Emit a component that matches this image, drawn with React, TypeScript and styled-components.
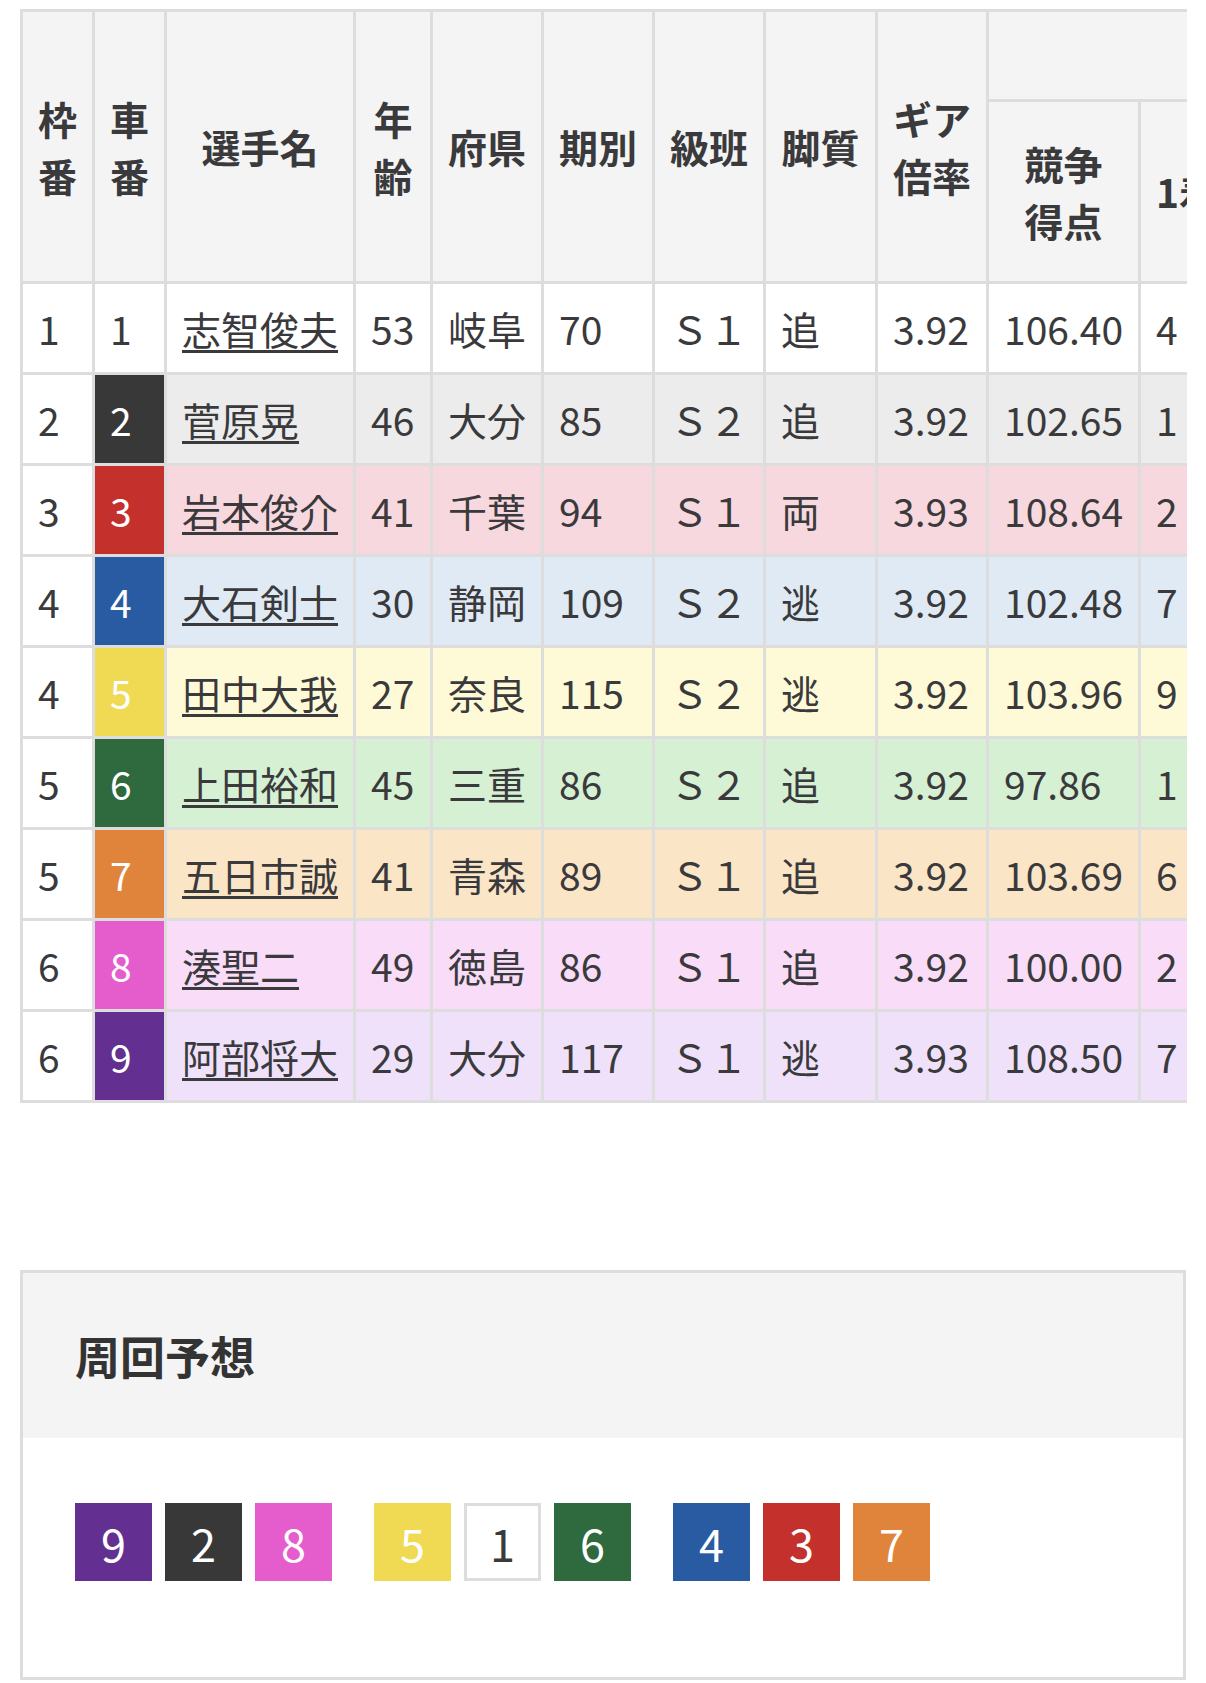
import React from 'react';
import styled, { createGlobalStyle } from 'styled-components';

const GlobalStyle = createGlobalStyle`
    body {
        margin: 0;
        background: #ffffff;
        color: #3a3a3c;
        font-family: 'Noto Sans CJK JP', 'Noto Sans', sans-serif;
    }
`;

type Car = { bg: string; fg: string; row: string };

const cars: Record<number, Car> = {
    1: { bg: '#ffffff', fg: '#3a3a3c', row: '#ffffff' },
    2: { bg: '#383838', fg: '#ffffff', row: '#ececec' },
    3: { bg: '#c4302b', fg: '#ffffff', row: '#f8d8df' },
    4: { bg: '#295ba3', fg: '#ffffff', row: '#e0eaf5' },
    5: { bg: '#f0da54', fg: '#ffffff', row: '#fefad8' },
    6: { bg: '#2e6a3e', fg: '#ffffff', row: '#d6f0d4' },
    7: { bg: '#e0843c', fg: '#ffffff', row: '#fbe5c7' },
    8: { bg: '#e55ccd', fg: '#ffffff', row: '#f8dcf8' },
    9: { bg: '#633092', fg: '#ffffff', row: '#f0e1fa' },
};

const racers = [
    { waku: 1, car: 1, name: '志智俊夫', age: 53, pref: '岐阜', term: 70, cls: 'Ｓ１', leg: '追', gear: '3.92', score: '106.40', first: 4 },
    { waku: 2, car: 2, name: '菅原晃', age: 46, pref: '大分', term: 85, cls: 'Ｓ２', leg: '追', gear: '3.92', score: '102.65', first: 1 },
    { waku: 3, car: 3, name: '岩本俊介', age: 41, pref: '千葉', term: 94, cls: 'Ｓ１', leg: '両', gear: '3.93', score: '108.64', first: 2 },
    { waku: 4, car: 4, name: '大石剣士', age: 30, pref: '静岡', term: 109, cls: 'Ｓ２', leg: '逃', gear: '3.92', score: '102.48', first: 7 },
    { waku: 4, car: 5, name: '田中大我', age: 27, pref: '奈良', term: 115, cls: 'Ｓ２', leg: '逃', gear: '3.92', score: '103.96', first: 9 },
    { waku: 5, car: 6, name: '上田裕和', age: 45, pref: '三重', term: 86, cls: 'Ｓ２', leg: '追', gear: '3.92', score: '97.86', first: 1 },
    { waku: 5, car: 7, name: '五日市誠', age: 41, pref: '青森', term: 89, cls: 'Ｓ１', leg: '追', gear: '3.92', score: '103.69', first: 6 },
    { waku: 6, car: 8, name: '湊聖二', age: 49, pref: '徳島', term: 86, cls: 'Ｓ１', leg: '追', gear: '3.92', score: '100.00', first: 2 },
    { waku: 6, car: 9, name: '阿部将大', age: 29, pref: '大分', term: 117, cls: 'Ｓ１', leg: '逃', gear: '3.93', score: '108.50', first: 7 },
];

const colWidths = [72, 72, 189, 77, 111, 111, 111, 112, 111, 152, 92];

const lineup = [
    [9, 2, 8],
    [5, 1, 6],
    [4, 3, 7],
];

const App = () => {
    return (
        <>
            <GlobalStyle />
            <Page>
                <TableScroll>
                    <Table>
                        <colgroup>
                            {colWidths.map((w, i) => (
                                <col key={i} style={{ width: w }} />
                            ))}
                        </colgroup>
                        <thead>
                            <GroupRow>
                                <Th rowSpan={2}>枠番</Th>
                                <Th rowSpan={2}>車番</Th>
                                <Th rowSpan={2}>選手名</Th>
                                <Th rowSpan={2}>年齢</Th>
                                <Th rowSpan={2}>府県</Th>
                                <Th rowSpan={2}>期別</Th>
                                <Th rowSpan={2}>級班</Th>
                                <Th rowSpan={2}>脚質</Th>
                                <Th rowSpan={2}>
                                    ギア
                                    <br />
                                    倍率
                                </Th>
                                <Th colSpan={2}></Th>
                            </GroupRow>
                            <SubRow>
                                <Th>
                                    競争
                                    <br />
                                    得点
                                </Th>
                                <Th $nowrap>1着</Th>
                            </SubRow>
                        </thead>
                        <tbody>
                            {racers.map((r) => (
                                <BodyRow key={r.car} $bg={cars[r.car].row}>
                                    <WakuCell>{r.waku}</WakuCell>
                                    <CarCell $bg={cars[r.car].bg} $fg={cars[r.car].fg}>
                                        {r.car}
                                    </CarCell>
                                    <Td>
                                        <NameLink href="#">{r.name}</NameLink>
                                    </Td>
                                    <Td>{r.age}</Td>
                                    <Td>{r.pref}</Td>
                                    <Td>{r.term}</Td>
                                    <Td>{r.cls}</Td>
                                    <Td>{r.leg}</Td>
                                    <Td>{r.gear}</Td>
                                    <Td>{r.score}</Td>
                                    <Td>{r.first}</Td>
                                </BodyRow>
                            ))}
                        </tbody>
                    </Table>
                </TableScroll>

                <Box>
                    <BoxHeader>周回予想</BoxHeader>
                    <BoxBody>
                        <Lineup>
                            {lineup.map((group, gi) => (
                                <Group key={gi}>
                                    {group.map((n) => (
                                        <CarSquare key={n} $bg={cars[n].bg} $fg={cars[n].fg} $outlined={n === 1}>
                                            {n}
                                        </CarSquare>
                                    ))}
                                </Group>
                            ))}
                        </Lineup>
                    </BoxBody>
                </Box>
            </Page>
        </>
    );
};

export default App;

const Page = styled.div`
    padding: 9px 20px 3px 20px;
`;

const TableScroll = styled.div`
    width: 1167px;
    overflow-x: auto;
    scrollbar-width: none;
    &::-webkit-scrollbar {
        display: none;
    }
`;

const Table = styled.table`
    table-layout: fixed;
    width: 1213px;
    border-collapse: separate;
    border-spacing: 0;
    border-top: 3px solid #dddddd;
    border-left: 3px solid #dddddd;
    font-size: 39px;
    line-height: 58px;
    color: #3a3a3c;
`;

const GroupRow = styled.tr`
    height: 90px;
`;

const SubRow = styled.tr`
    height: 182px;
`;

const Th = styled.th<{ $nowrap?: boolean }>`
    background: #f4f4f4;
    font-weight: 700;
    text-align: ${(p) => (p.$nowrap ? 'left' : 'center')};
    vertical-align: middle;
    padding: 0 15px;
    line-height: 57px;
    color: #3a3a3c;
    border-right: 3px solid #dddddd;
    border-bottom: 3px solid #dddddd;
    white-space: ${(p) => (p.$nowrap ? 'nowrap' : 'normal')};
    word-break: break-all;
`;

const BodyRow = styled.tr<{ $bg: string }>`
    height: 91px;
    background: ${(p) => p.$bg};
`;

const Td = styled.td`
    padding: 15px 15px;
    text-align: left;
    vertical-align: middle;
    white-space: nowrap;
    border-right: 3px solid #dddddd;
    border-bottom: 3px solid #dddddd;
`;

const WakuCell = styled(Td)`
    background: #ffffff;
`;

const CarCell = styled(Td)<{ $bg: string; $fg: string }>`
    background: ${(p) => p.$bg};
    color: ${(p) => p.$fg};
`;

const NameLink = styled.a`
    color: #3a3a3c;
    text-decoration: underline;
    text-decoration-thickness: 3px;
    text-underline-offset: 5px;
`;

const Box = styled.div`
    margin-top: 167px;
    width: 1166px;
    box-sizing: border-box;
    border: 3px solid #dddddd;
`;

const BoxHeader = styled.div`
    background: #f4f4f4;
    height: 165px;
    display: flex;
    align-items: center;
    padding: 0 52px;
    font-size: 45px;
    font-weight: 700;
    color: #333333;
`;

const BoxBody = styled.div`
    padding: 65px 52px 96px;
    background: #ffffff;
`;

const Lineup = styled.div`
    display: flex;
    gap: 42px;
`;

const Group = styled.div`
    display: flex;
    gap: 13px;
`;

const CarSquare = styled.div<{ $bg: string; $fg: string; $outlined: boolean }>`
    width: 77px;
    height: 78px;
    box-sizing: border-box;
    display: flex;
    align-items: center;
    justify-content: center;
    background: ${(p) => p.$bg};
    color: ${(p) => p.$fg};
    border: ${(p) => (p.$outlined ? '3px solid #dddddd' : 'none')};
    font-size: 45px;
    line-height: 1;
`;
